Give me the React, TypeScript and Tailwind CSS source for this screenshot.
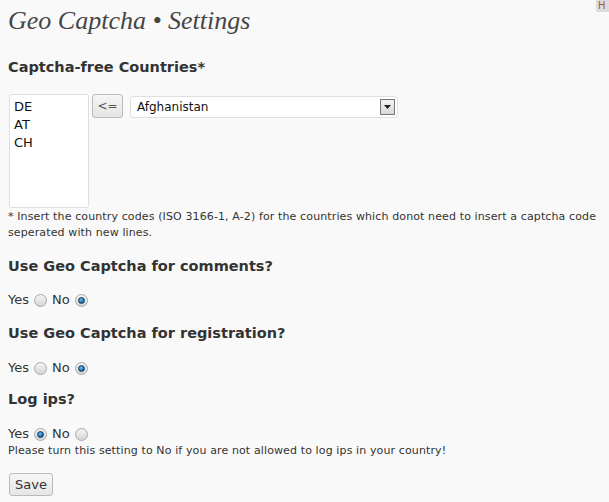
import { useState } from 'react';

const Radio = ({ checked }: { checked: boolean }) => (
  <span className="inline-flex items-center justify-center w-[13px] h-[13px] rounded-full border border-[#a8a8a8] bg-gradient-to-b from-[#f4f4f4] to-[#d6d6d6]">
    {checked && <span className="w-[7px] h-[7px] rounded-full bg-[radial-gradient(circle_at_40%_35%,#6fc0ee,#1f6fa8_60%,#0b3e66)] border border-[#0e3f66]" />}
  </span>
);

const YesNo = ({ value, className }: { value: 'yes' | 'no'; className: string }) => (
  <div className={`flex items-center gap-[5px] h-[18px] text-[13px] text-[#333] ${className}`}>
    <span>Yes</span>
    <Radio checked={value === 'yes'} />
    <span>No</span>
    <Radio checked={value === 'no'} />
  </div>
);

const Heading = ({ children, className }: { children: string; className: string }) => (
  <h3 className={`text-[14.5px] font-bold text-[#333] leading-[20px] ${className}`}>{children}</h3>
);

export default function App() {
  const [codes] = useState('DE\nAT\nCH');

  return (
    <div className="relative w-[609px] h-[502px] bg-[#f9f9f9] overflow-hidden font-['DejaVu_Sans',Verdana,sans-serif] text-[#333]">
      <div className="absolute top-0 right-0 w-[13px] h-[12px] bg-[#dcdcdc] rounded-bl-[2px] text-[10px] leading-[12px] pl-[2px] text-[#b0573a] overflow-hidden">H</div>

      <div className="pl-2 pt-[5px]">
        <h2 className="font-['Liberation_Serif',serif] italic text-[26px] leading-[32px] text-[#464646]">Geo Captcha • Settings</h2>

        <Heading className="mt-[20px]">Captcha-free Countries*</Heading>

        <div className="flex items-start mt-[17px] pl-[1px]">
          <textarea
            readOnly
            value={codes}
            className="w-[80px] h-[114px] resize-none bg-white border border-[#dfdfdf] rounded-[3px] px-[4px] py-[3px] text-[13px] leading-[18px] font-['DejaVu_Sans',sans-serif] text-[#111] outline-none"
          />
          <button className="ml-[3px] w-[31px] h-[24px] border border-[#bbb] rounded-[3px] bg-gradient-to-b from-[#f6f6f6] to-[#e4e4e4] text-[12px] text-[#555]">
            &lt;=
          </button>
          <div className="ml-[7px] mt-[2px] w-[268px] h-[22px] bg-white border border-[#dfdfdf] rounded-[3px] flex items-center justify-between pl-[6px] pr-[2px] text-[12px] text-[#111]">
            <span>Afghanistan</span>
            <span className="w-[15px] h-[16px] border border-[#777] bg-gradient-to-b from-[#f4f4f4] to-[#d8d8d8] flex items-center justify-center">
              <svg width="7" height="4" viewBox="0 0 7 4"><path d="M0 0h7L3.5 4z" fill="#222" /></svg>
            </span>
          </div>
        </div>

        <p className="mt-[1px] text-[11px] leading-[16px] tracking-[0.12px] text-[#333]">
          * Insert the country codes (ISO 3166-1, A-2) for the countries which donot need to insert a captcha code seperated with new lines.
        </p>

        <Heading className="mt-[15px]">Use Geo Captcha for comments?</Heading>
        <YesNo value="no" className="mt-[15px]" />

        <Heading className="mt-[14px]">Use Geo Captcha for registration?</Heading>
        <YesNo value="no" className="mt-[16px]" />

        <Heading className="mt-[12px]">Log ips?</Heading>
        <YesNo value="yes" className="mt-[16px]" />
        <p className="text-[11px] leading-[16px] tracking-[0.12px] text-[#333]">Please turn this setting to No if you are not allowed to log ips in your country!</p>

        <button className="block mt-[14px] ml-[1px] w-[44px] h-[23px] border border-[#bbb] rounded-[3px] bg-gradient-to-b from-[#f6f6f6] to-[#e6e6e6] text-[13px] text-[#333]">
          Save
        </button>
      </div>
    </div>
  );
}
